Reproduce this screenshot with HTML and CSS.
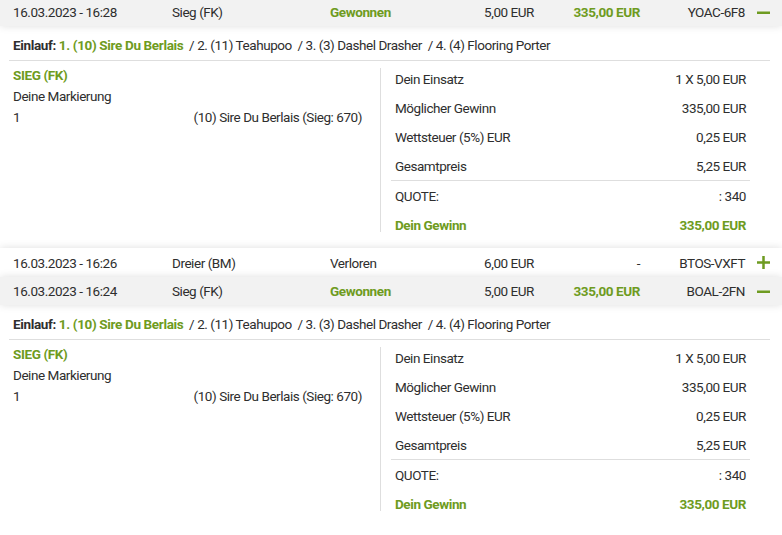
FILE: index.html
```html
<!DOCTYPE html>
<html lang="de">
<head>
<meta charset="utf-8">
<link rel="stylesheet" href="styles.css">
</head>
<body>
<div class="list">
  <div class="row row-open">
    <span>16.03.2023 - 16:28</span>
    <span>Sieg (FK)</span>
    <span class="green b">Gewonnen</span>
    <span class="r">5,00 EUR</span>
    <span class="r green b">335,00 EUR</span>
    <span class="r">YOAC-6F8</span>
    <span class="icon"><svg width="13" height="13" viewBox="0 0 13 13"><rect x="0" y="5.5" width="13" height="2.5" fill="#6e9b21"/></svg></span>
  </div>
  <div class="detail">
    <div class="einlauf"><b>Einlauf:</b> <b class="green">1. (10) Sire Du Berlais</b> &nbsp;/ 2. (11) Teahupoo &nbsp;/ 3. (3) Dashel Drasher &nbsp;/ 4. (4) Flooring Porter</div>
    <div class="body">
      <div class="left">
        <div class="left-inner">
          <div class="green b">SIEG (FK)</div>
          <div>Deine Markierung</div>
          <div class="pick"><span>1</span><span>(10) Sire Du Berlais (Sieg: 670)</span></div>
        </div>
      </div>
      <div class="right">
        <div class="kv"><span>Dein Einsatz</span><span>1 X 5,00 EUR</span></div>
        <div class="kv"><span>Möglicher Gewinn</span><span>335,00 EUR</span></div>
        <div class="kv"><span>Wettsteuer (5%) EUR</span><span>0,25 EUR</span></div>
        <div class="kv sep"><span>Gesamtpreis</span><span>5,25 EUR</span></div>
        <div class="kv"><span>QUOTE:</span><span>: 340</span></div>
        <div class="kv green b"><span>Dein Gewinn</span><span>335,00 EUR</span></div>
      </div>
    </div>
  </div>
  <div class="row row-white">
    <span>16.03.2023 - 16:26</span>
    <span>Dreier (BM)</span>
    <span>Verloren</span>
    <span class="r">6,00 EUR</span>
    <span class="r">-</span>
    <span class="r">BTOS-VXFT</span>
    <span class="icon"><svg width="13" height="13" viewBox="0 0 13 13"><rect x="0" y="5.25" width="13" height="2.5" fill="#6e9b21"/><rect x="5.25" y="0" width="2.5" height="13" fill="#6e9b21"/></svg></span>
  </div>
  <div class="row row-open">
    <span>16.03.2023 - 16:24</span>
    <span>Sieg (FK)</span>
    <span class="green b">Gewonnen</span>
    <span class="r">5,00 EUR</span>
    <span class="r green b">335,00 EUR</span>
    <span class="r">BOAL-2FN</span>
    <span class="icon"><svg width="13" height="13" viewBox="0 0 13 13"><rect x="0" y="5.5" width="13" height="2.5" fill="#6e9b21"/></svg></span>
  </div>
  <div class="detail">
    <div class="einlauf"><b>Einlauf:</b> <b class="green">1. (10) Sire Du Berlais</b> &nbsp;/ 2. (11) Teahupoo &nbsp;/ 3. (3) Dashel Drasher &nbsp;/ 4. (4) Flooring Porter</div>
    <div class="body">
      <div class="left">
        <div class="left-inner">
          <div class="green b">SIEG (FK)</div>
          <div>Deine Markierung</div>
          <div class="pick"><span>1</span><span>(10) Sire Du Berlais (Sieg: 670)</span></div>
        </div>
      </div>
      <div class="right">
        <div class="kv"><span>Dein Einsatz</span><span>1 X 5,00 EUR</span></div>
        <div class="kv"><span>Möglicher Gewinn</span><span>335,00 EUR</span></div>
        <div class="kv"><span>Wettsteuer (5%) EUR</span><span>0,25 EUR</span></div>
        <div class="kv sep"><span>Gesamtpreis</span><span>5,25 EUR</span></div>
        <div class="kv"><span>QUOTE:</span><span>: 340</span></div>
        <div class="kv green b"><span>Dein Gewinn</span><span>335,00 EUR</span></div>
      </div>
    </div>
  </div>
</div>
</body>
</html>
```
FILE: styles.css
```css
html, body {
  margin: 0;
  padding: 0;
  background: #fff;
}
body {
  font-family: Roboto, "Liberation Sans", sans-serif;
  font-size: 13.5px;
  letter-spacing: -0.45px;
  color: #2e2e2e;
}
.list {
  margin-top: -2px;
}
.green { color: #6e9b21; }
.b { font-weight: 700; letter-spacing: -0.4px; }
.r { text-align: right; }

.row {
  position: relative;
  display: grid;
  grid-template-columns: 159px 158px 100px 104px 106px 105px 37px;
  align-items: center;
  height: 28px;
  padding-left: 13px;
  box-sizing: border-box;
  box-shadow: 0 0 8px rgba(0, 0, 0, 0.13);
}
.row-open { background: #f2f2f2; }
.row-white { background: #fff; height: 29px; }
.icon {
  display: flex;
  padding-left: 12px;
}

.detail {
  margin: 0 12px 0 9px;
}
.einlauf {
  padding: 9px 4px 5px;
  line-height: 20px;
  border-bottom: 1px solid #dedede;
}
.einlauf b { font-weight: 700; letter-spacing: -0.35px; }
.body {
  display: flex;
  align-items: flex-start;
  padding-bottom: 9px;
}
.left {
  width: 372px;
  flex: none;
  height: 164px;
  margin-top: 7px;
  border-right: 1px solid #dedede;
  box-sizing: border-box;
}
.left-inner {
  margin-top: -3px;
  padding: 0 18px 0 4px;
  line-height: 21px;
}
.pick {
  display: flex;
  justify-content: space-between;
}
.right {
  flex: 1;
  margin: 3px 20px 0 10px;
}
.kv {
  display: flex;
  justify-content: space-between;
  height: 29px;
  align-items: center;
  padding: 0 4px;
}
.kv.sep {
  border-bottom: 1px solid #dedede;
}
```
